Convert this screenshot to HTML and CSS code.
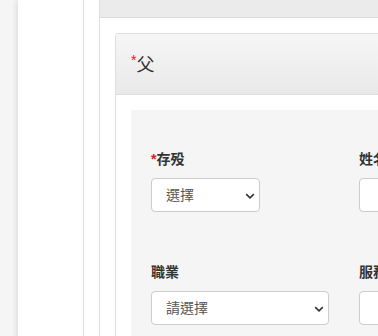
FILE: index.html
```html
<!DOCTYPE html>
<html lang="zh-Hant">
<head>
    <meta charset="UTF-8">
    <meta name="viewport" content="width=device-width, initial-scale=1.0">
    <title>家庭資料</title>
    <link rel="stylesheet" href="styles.css">
</head>
<body>
    <div class="layout">
        <aside class="sidebar"></aside>
        <main class="main">
            <div class="content">
                <div class="topbar"></div>
                <div class="content-body">
                    <div class="panel">
                        <div class="panel-heading">
                            <span class="req">*</span>父
                        </div>
                        <div class="panel-body">
                            <div class="form-box">
                                <div class="form-grid">
                                    <div class="form-group">
                                        <label><span class="req">*</span>存殁</label>
                                        <div class="select-wrap short">
                                            <select class="form-control">
                                                <option>選擇</option>
                                                <option>存</option>
                                                <option>殁</option>
                                            </select>
                                            <svg class="chevron" width="10" height="6" viewBox="0 0 10 6"><path d="M1.2 1.2 L5 4.8 L8.8 1.2" fill="none" stroke="#333" stroke-width="1.6"/></svg>
                                        </div>
                                    </div>
                                    <div class="form-group">
                                        <label>姓名</label>
                                        <input class="form-control" type="text">
                                    </div>
                                    <div class="form-group">
                                        <label>出生日期</label>
                                        <input class="form-control" type="text">
                                    </div>

                                    <div class="form-group">
                                        <label>職業</label>
                                        <div class="select-wrap">
                                            <select class="form-control">
                                                <option>請選擇</option>
                                            </select>
                                            <svg class="chevron" width="10" height="6" viewBox="0 0 10 6"><path d="M1.2 1.2 L5 4.8 L8.8 1.2" fill="none" stroke="#333" stroke-width="1.6"/></svg>
                                        </div>
                                    </div>
                                    <div class="form-group">
                                        <label>服務單位</label>
                                        <input class="form-control" type="text">
                                    </div>
                                    <div class="form-group">
                                        <label>職稱</label>
                                        <input class="form-control" type="text">
                                    </div>
                                </div>
                            </div>
                        </div>
                    </div>
                </div>
            </div>
        </main>
    </div>
</body>
</html>
```

FILE: styles.css
```css
* {
    box-sizing: border-box;
}
body {
    margin: 0;
    overflow: hidden;
    font-family: "Liberation Sans", "Noto Sans CJK TC", sans-serif;
    font-size: 14px;
    color: #333;
}
.layout {
    display: flex;
    min-height: 100vh;
    padding-left: 18px;
    background: #f5f5f5;
}
.sidebar {
    width: 66px;
    flex-shrink: 0;
    background: #fff;
    border-right: 1px solid #ddd;
    box-shadow: -2px 0 5px rgba(0, 0, 0, 0.09);
}
.main {
    width: 900px;
    flex-shrink: 0;
    background: #fff;
    padding-left: 15px;
}
.content {
    min-height: 100vh;
    border-left: 1px solid #ddd;
}
.topbar {
    height: 18px;
    background: #ebebeb;
    border-bottom: 1px solid #ddd;
}
.content-body {
    padding: 15px;
}
.panel {
    border: 1px solid #ddd;
    border-radius: 3px 0 0 0;
}
.panel-heading {
    display: flex;
    align-items: center;
    height: 61px;
    padding: 0 15px 3px;
    font-size: 18px;
    background: linear-gradient(#f6f6f6, #e9e9e9);
    border-bottom: 1px solid #ddd;
}
.panel-heading .req {
    font-size: 14px;
    align-self: center;
    margin-top: -6px;
}
.req {
    color: #e0161b;
}
.panel-body {
    padding: 15px;
}
.form-box {
    background: #f5f5f5;
    padding: 39px 20px 30px;
}
.form-grid {
    display: grid;
    grid-template-columns: repeat(3, 208px);
    row-gap: 50px;
}
.form-group label {
    display: block;
    line-height: 20px;
    margin-bottom: 9px;
    font-weight: bold;
}
.form-control {
    display: block;
    width: 178px;
    height: 34px;
    padding: 0 14px;
    font-family: inherit;
    font-size: 14px;
    color: #555;
    background: #fff;
    border: 1px solid #ccc;
    border-radius: 4px;
}
.select-wrap {
    position: relative;
    width: 178px;
}
.select-wrap.short {
    width: 109px;
}
.select-wrap select {
    width: 100%;
    appearance: none;
    -webkit-appearance: none;
}
.chevron {
    position: absolute;
    right: 5px;
    top: 15px;
    pointer-events: none;
}
```
